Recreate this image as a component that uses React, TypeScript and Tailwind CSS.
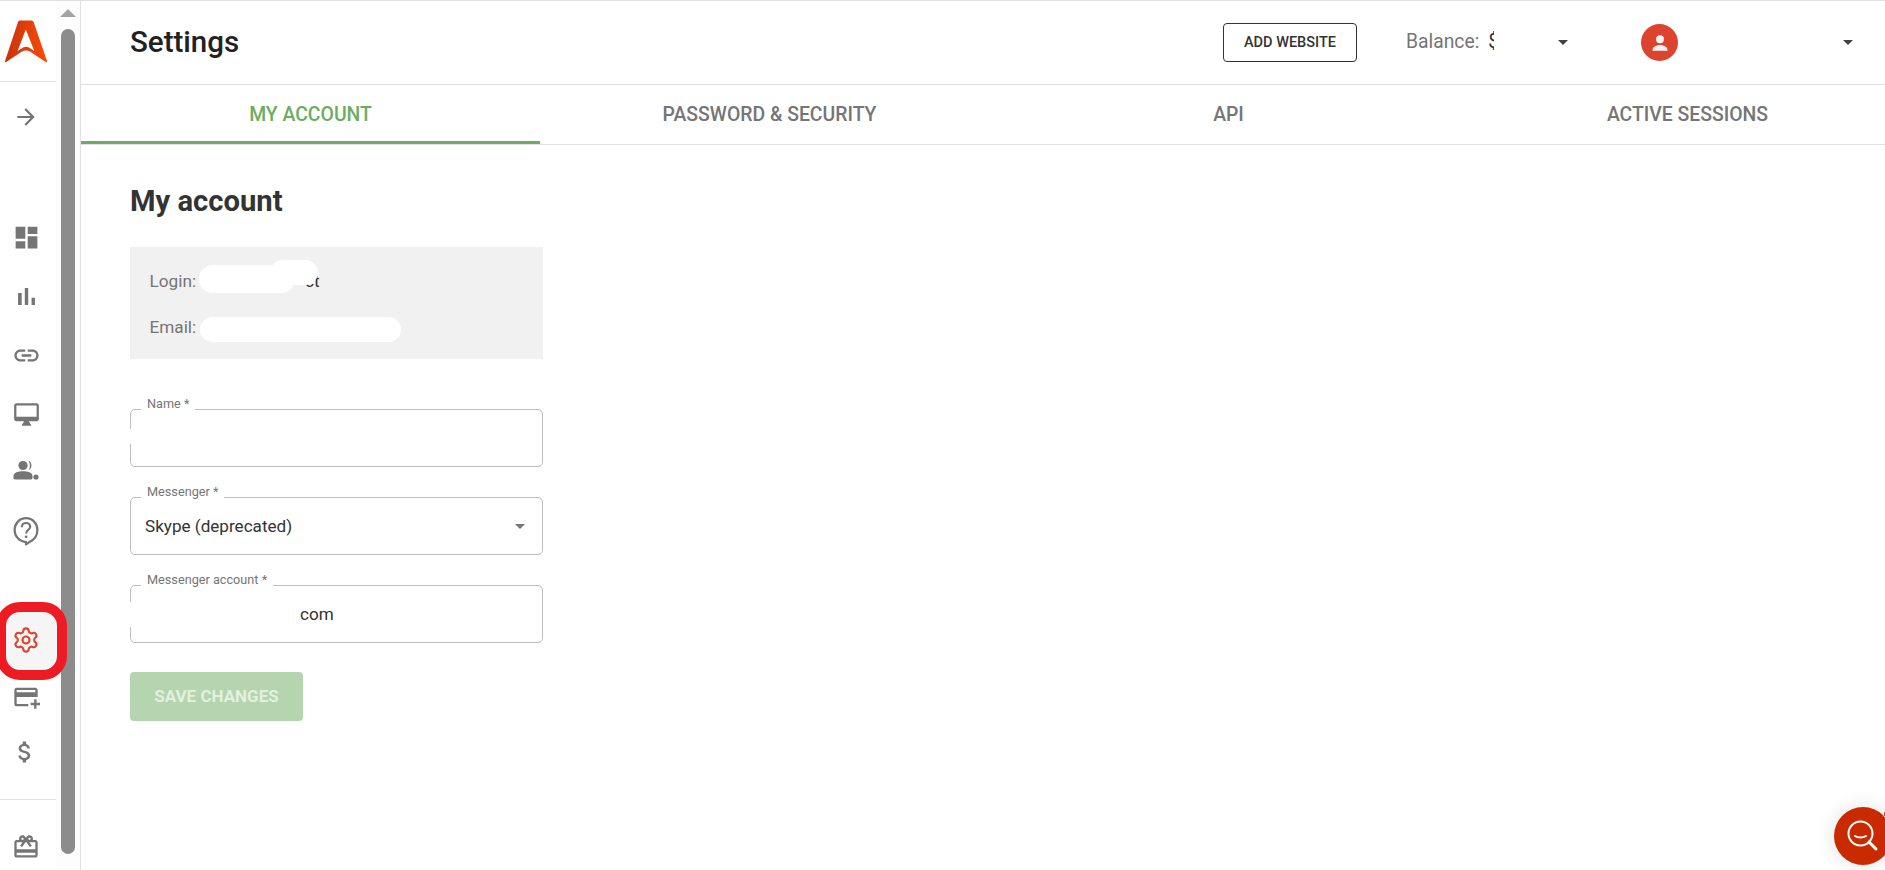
import { Settings } from 'lucide-react'

const ICON_GRAY = '#757575'

function MuiIcon({ d, size = 24 }: { d: string; size?: number }) {
  return (
    <svg width={size} height={size} viewBox="0 0 24 24" fill={ICON_GRAY}>
      <path d={d} />
    </svg>
  )
}

function Logo() {
  return (
    <svg width="44" height="44" viewBox="0 0 44 44">
      <defs>
        <linearGradient id="logoGrad" x1="0" y1="0" x2="1" y2="0">
          <stop offset="0" stopColor="#c9320c" />
          <stop offset="1" stopColor="#fb4a06" />
        </linearGradient>
      </defs>
      <path
        d="M15.5 0.5 H27.5 Q29 0.5 29.6 2 L43 41 Q43.2 42.5 42 42.2 L26 31.5 Q22 29.5 18 31.5 L1.8 42.2 Q0.6 42.5 1 41 L14 2 Q14.5 0.5 15.5 0.5 Z M21.8 9.5 L13.6 31 L19.5 27.3 Q22 26 24.5 27.3 L30.4 31 Z"
        fill="url(#logoGrad)"
        fillRule="evenodd"
      />
    </svg>
  )
}

function PeopleIcon() {
  return (
    <svg width="26" height="24" viewBox="0 0 26 24" fill={ICON_GRAY}>
      <circle cx="10" cy="7.5" r="4.6" />
      <path d="M15.5 2.8 C19 3.4 19.8 10.8 15.8 12 C17.4 9.6 17.4 5.6 15.5 2.8 Z" />
      <path d="M0.5 18 C0.5 14.6 5.5 13.2 10 13.2 C14.5 13.2 19.5 14.6 19.5 18 V20 Q19.5 21.4 18 21.4 H2 Q0.5 21.4 0.5 20 Z" />
      <circle cx="23" cy="19" r="2.6" />
    </svg>
  )
}

function HelpIcon() {
  return (
    <svg width="26" height="30" viewBox="0 0 26 30" fill="none" stroke={ICON_GRAY}>
      <path
        d="M13 26 C6.4 25.6 1.6 20.6 1.6 14 C1.6 7.4 6.6 2.2 13 2.2 C19.4 2.2 24.4 7.4 24.4 14 C24.4 20 20.4 24.4 15.6 26.6 L13 28.4 Z"
        strokeWidth="2.2"
        strokeLinejoin="round"
      />
      <path
        d="M8.8 11.2 C8.8 8.6 10.8 7 13 7 C15.4 7 17.2 8.6 17.2 10.8 C17.2 13.6 13.2 14 13.2 17.4"
        strokeWidth="2.2"
      />
      <circle cx="13.1" cy="20.8" r="1.4" fill={ICON_GRAY} stroke="none" />
    </svg>
  )
}

function Caret({ color = '#424242' }: { color?: string }) {
  return (
    <svg width="10" height="5" viewBox="0 0 10 5" fill={color}>
      <path d="M0 0h10L5 5z" />
    </svg>
  )
}

function Field({
  label,
  notch,
  className,
  children,
}: {
  label: string
  notch?: boolean
  className?: string
  children?: React.ReactNode
}) {
  return (
    <div className={`relative h-[58px] w-[413px] rounded-[5px] border border-[#bdbdbd] bg-white ${className ?? ''}`}>
      <span className="absolute top-[-16px] left-[10px] bg-white px-[6px] text-[12.7px] leading-[20px] text-[#757575]">
        {label}
      </span>
      {notch && <span className="absolute top-[19px] left-[-2px] h-[15px] w-[6px] bg-white" />}
      {children}
    </div>
  )
}

const TABS = ['MY ACCOUNT', 'PASSWORD & SECURITY', 'API', 'ACTIVE SESSIONS']

export default function App() {
  return (
    <div className="relative flex h-[870px] w-[1885px] overflow-hidden border-t border-[#e0e0e0] bg-white font-['Roboto',sans-serif]">
      {/* Sidebar */}
      <aside className="flex w-[56px] shrink-0 flex-col">
        <div className="flex h-[81px] items-start justify-center border-b border-[#e0e0e0] pt-[19px] pr-[5px]">
          <Logo />
        </div>
        <div className="flex flex-col items-center pr-[4px]">
          <div className="mt-[22px]">
            <MuiIcon size={26} d="M12 4l-1.41 1.41L16.17 11H4v2h12.17l-5.58 5.59L12 20l8-8z" />
          </div>
          <div className="mt-[93px]">
            <MuiIcon size={29} d="M3 13h8V3H3v10zm0 8h8v-6H3v6zm10 0h8V11h-8v10zm0-18v6h8V3h-8z" />
          </div>
          <div className="mt-[30px]">
            <MuiIcon size={29} d="M5 9.2h3V19H5zM10.6 5h2.8v14h-2.8zm5.6 8H19v6h-2.8z" />
          </div>
          <div className="mt-[30px]">
            <MuiIcon
              size={29}
              d="M3.9 12c0-1.71 1.39-3.1 3.1-3.1h4V7H7c-2.76 0-5 2.24-5 5s2.24 5 5 5h4v-1.9H7c-1.71 0-3.1-1.39-3.1-3.1zM8 13h8v-2H8v2zm9-6h-4v1.9h4c1.71 0 3.1 1.39 3.1 3.1s-1.39 3.1-3.1 3.1h-4V17h4c2.76 0 5-2.24 5-5s-2.24-5-5-5z"
            />
          </div>
          <div className="mt-[31px]">
            <MuiIcon
              size={27}
              d="M21 2H3c-1.1 0-2 .9-2 2v12c0 1.1.9 2 2 2h7l-2 3v1h8v-1l-2-3h7c1.1 0 2-.9 2-2V4c0-1.1-.9-2-2-2zm0 12H3V4h18v10z"
            />
          </div>
          <div className="mt-[30px]">
            <PeopleIcon />
          </div>
          <div className="mt-[34px]">
            <HelpIcon />
          </div>
        </div>

        <div className="relative mt-[56px] flex h-[78px] items-center justify-center">
          <div className="absolute top-0 left-[-4px] h-[78px] w-[71px] rounded-[24px] border-[10px] border-[#ed1c24] bg-[#f5f5f5]" />
          <Settings className="relative mr-[4px] mb-[3px] h-[28px] w-[28px] text-[#dc4430]" strokeWidth={1.8} />
        </div>

        <div className="flex flex-col items-center pr-[4px]">
          <div className="mt-[3px]">
            <MuiIcon
              size={28}
              d="M20 4H4c-1.11 0-1.99.89-1.99 2L2 18c0 1.11.89 2 2 2h10v-2H4v-6h18V6c0-1.11-.89-2-2-2zm0 4H4V6h16v2zm4 9v2h-3v3h-2v-3h-3v-2h3v-3h2v3h3z"
            />
          </div>
          <div className="mt-[27px] pr-[3px]">
            <MuiIcon
              size={28}
              d="M11.8 10.9c-2.27-.59-3-1.2-3-2.15 0-1.09 1.01-1.85 2.7-1.85 1.78 0 2.44.85 2.5 2.1h2.21c-.07-1.72-1.12-3.3-3.21-3.81V3h-3v2.16c-1.94.42-3.5 1.68-3.5 3.61 0 2.31 1.91 3.46 4.7 4.13 2.5.6 3 1.48 3 2.41 0 .69-.49 1.79-2.7 1.79-2.06 0-2.87-.92-2.98-2.1h-2.2c.12 2.19 1.76 3.42 3.68 3.83V21h3v-2.15c1.95-.37 3.5-1.5 3.5-3.55 0-2.84-2.43-3.81-4.7-4.4z"
            />
          </div>
        </div>
        <div className="mt-[33px] border-t border-[#e0e0e0]" />
        <div className="mt-[33px] flex justify-center pr-[4px]">
          <MuiIcon
            size={28}
            d="M20 6h-2.18c.11-.31.18-.65.18-1 0-1.66-1.34-3-3-3-1.05 0-1.96.54-2.5 1.35l-.5.67-.5-.68C10.96 2.54 10.05 2 9 2 7.34 2 6 3.34 6 5c0 .35.07.69.18 1H4c-1.11 0-1.99.89-1.99 2L2 19c0 1.11.89 2 2 2h16c1.11 0 2-.89 2-2V8c0-1.11-.89-2-2-2zm-5-2c.55 0 1 .45 1 1s-.45 1-1 1-1-.45-1-1 .45-1 1-1zM9 4c.55 0 1 .45 1 1s-.45 1-1 1-1-.45-1-1 .45-1 1-1zm11 15H4v-2h16v2zm0-5H4V8h5.08L7 10.83 8.62 12 11 8.76l1-1.36 1 1.36L15.38 12 17 10.83 14.92 8H20v6z"
          />
        </div>
      </aside>

      {/* Scrollbar */}
      <div className="flex w-[25px] shrink-0 flex-col items-center border-r border-[#e0e0e0] bg-[#fdfdfd] pr-[1px]">
        <div className="mt-[8px] h-0 w-0 border-x-[8px] border-b-[8px] border-x-transparent border-b-[#a3a3a3]" />
        <div className="mt-[12px] h-[825px] w-[14px] rounded-full bg-[#8c8c8c]" />
      </div>

      {/* Main */}
      <main className="min-w-0 flex-1">
        <header className="flex h-[84px] items-center border-b border-[#e0e0e0] pl-[49px]">
          <h1 className="mb-[2px] w-[1093px] text-[29.5px] leading-[32px] font-medium text-[#212121]">Settings</h1>
          <button className="flex h-[39px] w-[134px] items-center justify-center rounded-[4px] border border-[#333] text-[14.5px] font-medium text-[#333]">
            ADD WEBSITE
          </button>
          <span className="ml-[49px] text-[19.3px] text-[#757575]">Balance:</span>
          <span className="ml-[9px] w-[6px] overflow-hidden text-[19.3px] text-[#333]">$</span>
          <span className="ml-[64px]">
            <Caret />
          </span>
          <span className="ml-[73px] flex h-[37px] w-[37px] items-center justify-center rounded-full bg-[#dc4430]">
            <svg width="24" height="24" viewBox="0 0 24 24" fill="#f2f2f2">
              <circle cx="12" cy="8.2" r="4" />
              <path d="M4.5 19c0-3.4 4.5-5 7.5-5s7.5 1.6 7.5 5v.8h-15z" />
            </svg>
          </span>
          <span className="ml-[165px]">
            <Caret />
          </span>
        </header>

        <nav className="flex h-[60px] border-b border-[#e0e0e0]">
          {TABS.map((tab, i) => (
            <div
              key={tab}
              className={`flex w-[459px] shrink-0 items-center justify-center border-b-[3px] pt-[4px] text-[19.4px] font-medium ${
                i === 0 ? 'border-[#6aad60] text-[#6aad60]' : 'border-transparent text-[#757575]'
              }`}
            >
              {tab}
            </div>
          ))}
        </nav>

        <section className="pt-[39px] pl-[49px]">
          <h2 className="text-[29.2px] leading-[34px] font-bold text-[#333]">My account</h2>

          <div className="relative mt-[29px] flex h-[112px] w-[413px] flex-col bg-[#f1f1f1] pt-[21px] pl-[19.5px] text-[17.2px] leading-[26px] text-[#757575]">
            <div>
              Login:
              <span className="ml-[109px] text-[#333]">ct</span>
            </div>
            <div className="mt-[20px]">Email:</div>
            {/* redacted values */}
            <span className="absolute top-[18px] left-[69px] h-[28px] w-[96px] rounded-full bg-white" />
            <span className="absolute top-[13px] left-[140px] h-[25px] w-[48px] rounded-full bg-white" />
            <span className="absolute top-[70px] left-[70px] h-[25px] w-[201px] rounded-full bg-white" />
          </div>

          <Field label="Name *" notch className="mt-[50px]" />

          <Field label="Messenger *" className="mt-[30px]">
            <div className="flex h-full items-center justify-between pr-[17px] pl-[14px] text-[17.1px] text-[#333]">
              <span className="pt-[1px]">Skype (deprecated)</span>
              <Caret color="#757575" />
            </div>
          </Field>

          <Field label="Messenger account *" className="mt-[30px]">
            <span className="absolute top-[16px] left-[-2px] h-[25px] w-[6px] bg-white" />
            <div className="flex h-full items-center pt-[1px] pl-[169px] text-[17.1px] text-[#333]">com</div>
          </Field>

          <button className="mt-[29px] flex h-[49px] w-[173px] items-center justify-center rounded-[4px] bg-[#b4d5ae] text-[17px] font-bold text-[#e3f0e0]">
            SAVE CHANGES
          </button>
        </section>
      </main>

      {/* Chat launcher */}
      <div className="absolute top-[806px] left-[1834px] flex h-[58px] w-[58px] items-center justify-center rounded-full bg-[#c92a00] shadow-[0_0_20px_rgba(0,0,0,0.12)]">
        <svg width="36" height="36" viewBox="0 0 36 36" fill="none" stroke="#fff" strokeWidth="2" strokeLinecap="round">
          <circle cx="15.5" cy="15.5" r="12" />
          <path d="M10 18c3 2 8 2 11 0" />
          <path d="M24 24l7 7" strokeWidth="3" />
        </svg>
      </div>
      <div className="absolute top-[808px] left-[1883px] h-[10px] w-[10px] rounded-full border border-white bg-[#e02020]" />
    </div>
  )
}
